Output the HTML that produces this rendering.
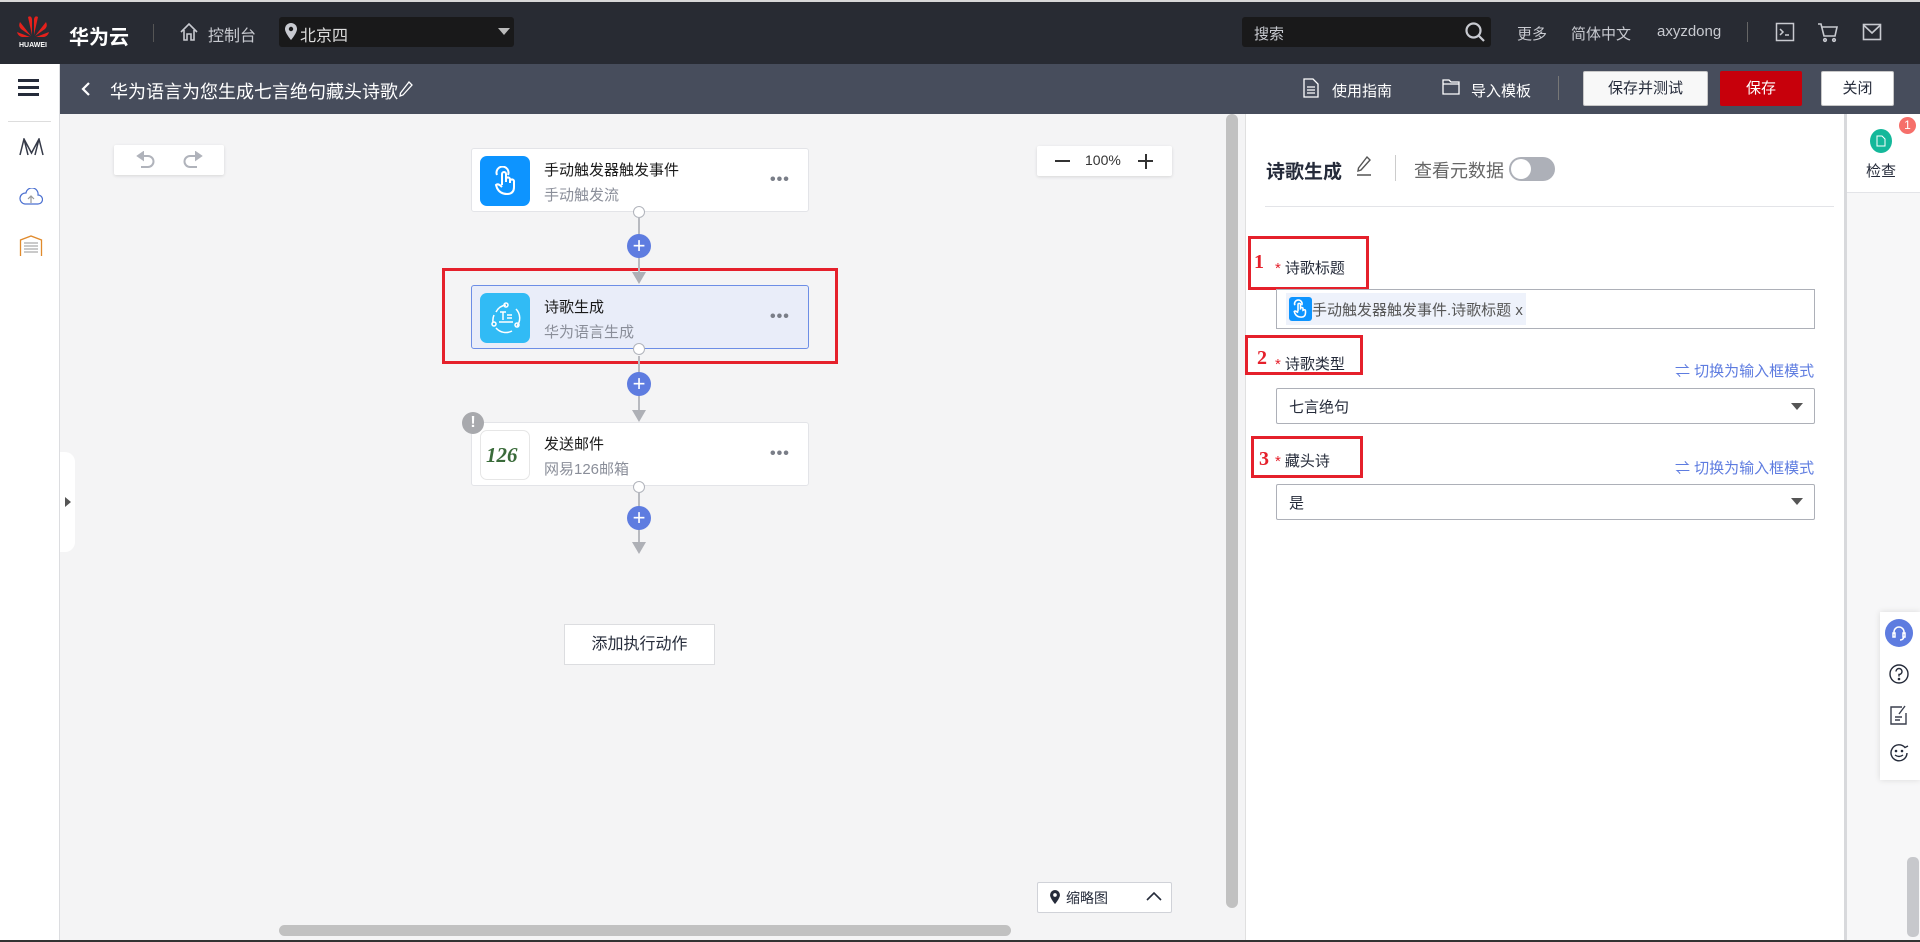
<!DOCTYPE html>
<html><head><meta charset="utf-8"><style>
*{box-sizing:border-box;margin:0;padding:0}
body{width:1920px;height:942px;overflow:hidden;position:relative;font-family:"Liberation Sans","Noto Sans CJK SC",sans-serif;background:#f4f4f5;color:#252b3a}
.a{position:absolute}
.top{left:0;top:0;width:1920px;height:64px;background:#282b33;border-top:2px solid #d8d8d8}
.sub{left:60px;top:64px;width:1860px;height:50px;background:#474d5c}
.wt{color:#fff}
.gt{color:#c8cad0;font-size:15px}
.btn{height:35px;border:1px solid #c8c8c8;background:#f8f8f8;font-size:15px;text-align:center;line-height:33px;border-radius:2px}
.card{left:471px;width:338px;height:64px;background:#fff;border:1px solid #e3e4e8;border-radius:3px}
.card .ic{position:absolute;left:8px;top:7px;width:50px;height:50px;border-radius:7px}
.card .t{position:absolute;left:72px;top:10px;font-size:15px;color:#191919}
.card .s{position:absolute;left:72px;top:35px;font-size:15px;color:#8a8e99}
.card .d{position:absolute;left:298px;top:22px;font-size:16px;color:#7a7e88;letter-spacing:1px;font-weight:bold}
.dot{width:12px;height:12px;border:1.5px solid #b0b3bb;border-radius:50%;background:#fff}
.plus{width:24px;height:24px;border-radius:50%;background:#5e7ce0;color:#fff;text-align:center;line-height:23px;font-size:22px}
.vl{width:2px;background:#b8bac0}
.arr{width:0;height:0;border-left:7px solid transparent;border-right:7px solid transparent;border-top:12px solid #aeb0b6}
.red{border:3px solid #e5202b}
.lab{font-size:15px;color:#252b3a}
.lab b{color:#e5202b;font-weight:normal;margin-right:4px}
.num{color:#e5202b;font-family:"Liberation Serif",serif;font-size:20px;font-weight:bold}
.inp{left:1276px;width:539px;border:1px solid #adb0b8;background:#fff}
.sw{color:#5e7ce0;font-size:15px}
.tri{width:0;height:0;border-left:6px solid transparent;border-right:6px solid transparent;border-top:7px solid #555}
</style></head><body>
<div class="a top"></div>
<svg class="a" style="left:15px;top:13px" width="36" height="36" viewBox="0 0 36 36">
<g fill="#e4211c"><path d="M17 22 L13 4 Q16 2 17 6Z"/><path d="M19 22 L23 4 Q20 2 19 6Z"/><path d="M16 23 L5 9 Q3 13 6 16Z"/><path d="M20 23 L31 9 Q33 13 30 16Z"/><path d="M15 24 L2 19 Q3 23 7 24Z"/><path d="M21 24 L34 19 Q33 23 29 24Z"/></g>
<text x="18" y="34" fill="#fff" font-size="7" font-family="Liberation Sans" text-anchor="middle" font-weight="bold">HUAWEI</text></svg>
<div class="a wt" style="left:69px;top:21px;font-size:20px;font-weight:bold">华为云</div>
<div class="a" style="left:153px;top:24px;width:1px;height:18px;background:#555"></div>
<svg class="a" style="left:179px;top:22px" width="20" height="20" viewBox="0 0 20 20" fill="none" stroke="#c8cad0" stroke-width="1.6"><path d="M2 10 L10 2 L18 10 M5 8 V18 H8 V12 H12 V18 H15 V8"/></svg>
<div class="a gt" style="left:208px;top:22px;font-size:16px">控制台</div>
<div class="a" style="left:279px;top:17px;width:235px;height:30px;background:#19191a;border-radius:3px"></div>
<svg class="a" style="left:285px;top:23px" width="12" height="17" viewBox="0 0 12 17"><path d="M6 0 A6 6 0 0 1 12 6 C12 10 6 17 6 17 C6 17 0 10 0 6 A6 6 0 0 1 6 0Z" fill="#c8cad0"/><circle cx="6" cy="6" r="2.2" fill="#19191a"/></svg>
<div class="a wt" style="left:300px;top:22px;font-size:16px;color:#ddd">北京四</div>
<div class="a tri" style="left:498px;top:28px;border-top-color:#bbb"></div>
<div class="a" style="left:1242px;top:17px;width:249px;height:30px;background:#19191a;border-radius:3px"></div>
<div class="a gt" style="left:1254px;top:23px">搜索</div>
<svg class="a" style="left:1464px;top:21px" width="22" height="22" viewBox="0 0 22 22" fill="none" stroke="#c8cad0" stroke-width="2.2"><circle cx="9.5" cy="9.5" r="7"/><path d="M14.5 14.5 L20 20"/></svg>
<div class="a gt" style="left:1517px;top:23px">更多</div>
<div class="a gt" style="left:1571px;top:23px">简体中文</div>
<div class="a gt" style="left:1657px;top:23px">axyzdong</div>
<div class="a" style="left:1747px;top:22px;width:1px;height:20px;background:#666"></div>
<svg class="a" style="left:1775px;top:22px" width="20" height="20" viewBox="0 0 20 20" fill="none" stroke="#c8cad0" stroke-width="1.5"><rect x="1.5" y="1.5" width="17" height="17"/><path d="M5 7 L8 10 L5 13 M10 13 H14"/></svg>
<svg class="a" style="left:1817px;top:21px" width="22" height="22" viewBox="0 0 22 22" fill="none" stroke="#c8cad0" stroke-width="1.6"><path d="M1 3 H4 L7 15 H18 L20 6 H5"/><circle cx="8" cy="19" r="1.3"/><circle cx="17" cy="19" r="1.3"/></svg>
<svg class="a" style="left:1862px;top:22px" width="20" height="20" viewBox="0 0 20 20" fill="none" stroke="#c8cad0" stroke-width="1.6"><rect x="1.5" y="2.5" width="17" height="15"/><path d="M1.5 3 L10 11 L18.5 3"/></svg>

<div class="a sub"></div>
<div class="a" style="left:0;top:64px;width:60px;height:878px;background:#fff;border-right:1px solid #dcdde0"></div>
<div class="a" style="left:18px;top:79px;width:21px;height:3px;background:#252b3a;box-shadow:0 7px 0 #252b3a,0 14px 0 #252b3a"></div>
<div class="a" style="left:8px;top:121px;width:43px;height:1px;background:#ddd"></div>
<svg class="a" style="left:19px;top:138px" width="25" height="18" viewBox="0 0 25 18" fill="none" stroke="#353a48" stroke-width="1.5"><path d="M1 17 L5 1 L12.5 15 L20 1 L24 17 M5 1 L9 17 M20 1 L16 17"/></svg>
<svg class="a" style="left:19px;top:188px" width="24" height="17" viewBox="0 0 24 17" fill="none" stroke="#4a6fd0" stroke-width="1.2"><path d="M6 16 H19 A4.5 4.5 0 0 0 19 7 A6 6 0 0 0 7 5 A5.5 5.5 0 0 0 6 16Z"/><path d="M12 15 V9 M9 11 L12 8 L15 11" stroke="#999"/></svg>
<svg class="a" style="left:19px;top:235px" width="24" height="21" viewBox="0 0 24 21" fill="none" stroke-width="1.3"><path d="M1.5 21 V5 L12 1 L22.5 5 V21" stroke="#e08a2c"/><path d="M5 8 H19 M5 11 H19 M5 14 H19 M5 17 H19" stroke="#aaa"/></svg>
<svg class="a" style="left:80px;top:81px" width="12" height="16" viewBox="0 0 12 16" fill="none" stroke="#fff" stroke-width="2.2"><path d="M9 2 L3 8 L9 14"/></svg>
<div class="a wt" style="left:110px;top:78px;font-size:18px">华为语言为您生成七言绝句藏头诗歌</div>
<svg class="a" style="left:398px;top:80px" width="16" height="18" viewBox="0 0 16 18" fill="none" stroke="#fff" stroke-width="1.3"><path d="M11 2 L14 5 L5 15 L2 16 L2.5 13Z"/></svg>
<svg class="a" style="left:1303px;top:78px" width="16" height="20" viewBox="0 0 16 20" fill="none" stroke="#fff" stroke-width="1.3"><path d="M1 1 H10 L15 6 V19 H1Z M4 9 H12 M4 12 H12 M4 15 H12"/></svg>
<div class="a wt" style="left:1332px;top:80px;font-size:15px">使用指南</div>
<svg class="a" style="left:1442px;top:79px" width="18" height="16" viewBox="0 0 18 16" fill="none" stroke="#fff" stroke-width="1.3"><path d="M1 1 H7 L9 3 H17 V15 H1Z M1 5 H17"/></svg>
<div class="a wt" style="left:1471px;top:80px;font-size:15px">导入模板</div>
<div class="a" style="left:1558px;top:76px;width:1px;height:24px;background:#777"></div>
<div class="a btn" style="left:1583px;top:71px;width:125px">保存并测试</div>
<div class="a btn" style="left:1720px;top:71px;width:82px;background:#c7000b;border-color:#c7000b;color:#fff">保存</div>
<div class="a btn" style="left:1821px;top:71px;width:73px;background:#fff">关闭</div>

<div class="a" style="left:114px;top:145px;width:110px;height:30px;background:#fff;border-radius:2px;box-shadow:0 1px 3px rgba(0,0,0,.12)"></div>
<svg class="a" style="left:135px;top:151px" width="70" height="18" viewBox="0 0 70 18" fill="none" stroke="#b0b3bb" stroke-width="2"><path d="M6 5 H13 A5 5 0 0 1 13 16 H6"/><path d="M3 5 L8 1.5 V8.5Z" fill="#b0b3bb"/><path d="M62 5 H55 A5 5 0 0 0 55 16 H62"/><path d="M66 5 L61 1.5 V8.5Z" fill="#b0b3bb"/></svg>
<div class="a" style="left:1037px;top:146px;width:135px;height:30px;background:#fff;border-radius:2px;box-shadow:0 1px 3px rgba(0,0,0,.12)"></div>
<div class="a" style="left:1055px;top:160px;width:15px;height:2px;background:#333"></div>
<div class="a" style="left:1085px;top:152px;font-size:14px;color:#333">100%</div>
<div class="a" style="left:1138px;top:160px;width:15px;height:2px;background:#333"></div>
<div class="a" style="left:1144.5px;top:154px;width:2px;height:15px;background:#333"></div>

<div class="a red" style="left:442px;top:268px;width:396px;height:96px"></div>
<div class="a card" style="top:148px"><div class="ic" style="background:#0d94ff"></div>
<svg class="a" style="left:22px;top:17px" width="24" height="30" viewBox="0 0 24 30" fill="none" stroke="#fff" stroke-width="2"><path d="M3 9 A6 6 0 1 1 14 9"/><path d="M8 19 V8 A2 2 0 0 1 12 8 V16 M12 13 A2 2 0 0 1 16 14 V17 M16 15 A2 2 0 0 1 20 16 V21 Q20 28 13 28 Q6 28 3 22 L2 19 Q4 17 8 21"/></svg>
<div class="t">手动触发器触发事件</div><div class="s">手动触发流</div><div class="d">•••</div></div>
<div class="a card" style="top:285px;background:#e9edf9;border-color:#6d8ee6"><div class="ic" style="background:#31bbf5"></div>
<svg class="a" style="left:16px;top:14px" width="36" height="36" viewBox="0 0 36 36" fill="none" stroke="#fff" stroke-width="1.5"><path d="M8 12 A13 13 0 0 1 18 5 M28 9 A13 13 0 0 1 29 26 M24 31 A13 13 0 0 1 8 28 M5 22 A13 13 0 0 1 6 15"/><circle cx="18" cy="5" r="2"/><circle cx="29" cy="25" r="2"/><circle cx="6" cy="24" r="2"/><path d="M12 12 H18 M15 12 V20 M19 15 H24 M19 18 H24 M11 22 H25"/></svg>
<div class="t">诗歌生成</div><div class="s">华为语言生成</div><div class="d">•••</div></div>
<div class="a card" style="top:422px"><div class="ic" style="border:1px solid #e6e6e6;background:#fff"></div>
<div class="a" style="left:14px;top:20px;font-size:21px;font-weight:bold;font-style:italic;color:#3a6b3a;font-family:'Liberation Serif',serif">126</div>
<div class="t">发送邮件</div><div class="s">网易126邮箱</div><div class="d">•••</div></div>
<div class="a" style="left:462px;top:412px;width:22px;height:22px;border-radius:50%;background:#a8a9ad;color:#fff;text-align:center;font-weight:bold;font-size:16px;line-height:22px">!</div>

<div class="a vl" style="left:638px;top:218px;height:55px"></div>
<div class="a vl" style="left:638px;top:356px;height:55px"></div>
<div class="a vl" style="left:638px;top:493px;height:50px"></div>
<div class="a dot" style="left:633px;top:206px"></div>
<div class="a dot" style="left:633px;top:343px"></div>
<div class="a dot" style="left:633px;top:481px"></div>
<div class="a plus" style="left:627px;top:234px">+</div>
<div class="a plus" style="left:627px;top:372px">+</div>
<div class="a plus" style="left:627px;top:506px">+</div>
<div class="a arr" style="left:632px;top:272px"></div>
<div class="a arr" style="left:632px;top:410px"></div>
<div class="a arr" style="left:632px;top:542px"></div>

<div class="a" style="left:564px;top:624px;width:151px;height:41px;background:#fff;border:1px solid #dcdde0;font-size:16px;text-align:center;line-height:39px;color:#252b3a">添加执行动作</div>
<div class="a" style="left:1037px;top:882px;width:135px;height:31px;background:#fff;border:1px solid #d0d2d8;border-radius:2px"></div>
<svg class="a" style="left:1050px;top:890px" width="10" height="14" viewBox="0 0 12 17"><path d="M6 0 A6 6 0 0 1 12 6 C12 10 6 17 6 17 C6 17 0 10 0 6 A6 6 0 0 1 6 0Z" fill="#252b3a"/><circle cx="6" cy="6" r="2.2" fill="#fff"/></svg>
<div class="a" style="left:1066px;top:888px;font-size:14px">缩略图</div>
<svg class="a" style="left:1146px;top:891px" width="16" height="10" viewBox="0 0 16 10" fill="none" stroke="#252b3a" stroke-width="1.6"><path d="M1 9 L8 2 L15 9"/></svg>
<div class="a" style="left:60px;top:452px;width:15px;height:100px;background:#fff;border-radius:0 10px 10px 0"></div>
<div class="a" style="left:65px;top:497px;width:0;height:0;border-top:5px solid transparent;border-bottom:5px solid transparent;border-left:6px solid #555"></div>
<div class="a" style="left:279px;top:925px;width:732px;height:11px;background:#c1c1c1;border-radius:6px"></div>
<div class="a" style="left:1226px;top:114px;width:12px;height:794px;background:#c1c1c1;border-radius:6px"></div>

<div class="a" style="left:1245px;top:114px;width:600px;height:828px;background:#fff;border-left:1px solid #e0e0e0"></div>
<div class="a" style="left:1266px;top:157px;font-size:19px;font-weight:bold;color:#252b3a">诗歌生成</div>
<svg class="a" style="left:1355px;top:155px" width="18" height="22" viewBox="0 0 18 22" fill="none" stroke="#555" stroke-width="1.4"><path d="M12 2 L15 5 L6 15 L3 16 L3.5 13Z M2 20 H16"/></svg>
<div class="a" style="left:1395px;top:155px;width:1px;height:26px;background:#ccc"></div>
<div class="a" style="left:1414px;top:157px;font-size:18px;color:#666">查看元数据</div>
<div class="a" style="left:1509px;top:157px;width:46px;height:24px;border-radius:12px;background:#adb0b8"></div>
<div class="a" style="left:1511px;top:159px;width:20px;height:20px;border-radius:50%;background:#fff"></div>
<div class="a" style="left:1265px;top:206px;width:569px;height:1px;background:#e3e4e8"></div>

<div class="a red" style="left:1248px;top:236px;width:121px;height:54px"></div>
<div class="a num" style="left:1254px;top:251px">1</div>
<div class="a lab" style="left:1275px;top:257px"><b>*</b>诗歌标题</div>
<div class="a inp" style="left:1276px;top:289px;height:40px"></div>
<div class="a" style="left:1286px;top:293px;width:240px;height:32px;background:#eef2fb"></div>
<div class="a" style="left:1289px;top:297px;width:23px;height:24px;background:#0d94ff;border-radius:3px"></div>
<svg class="a" style="left:1293px;top:299px" width="15" height="20" viewBox="0 0 24 30" fill="none" stroke="#fff" stroke-width="2.5"><path d="M3 9 A6 6 0 1 1 14 9"/><path d="M8 19 V8 A2 2 0 0 1 12 8 V16 M12 13 Q16 12 16 14 V17 Q20 15 20 18 V21 Q20 28 13 28 Q6 28 3 22 L2 19 Q4 17 8 21"/></svg>
<div class="a" style="left:1312px;top:299px;font-size:15px;color:#555">手动触发器触发事件.诗歌标题 x</div>

<div class="a red" style="left:1245px;top:335px;width:118px;height:40px"></div>
<div class="a num" style="left:1257px;top:347px">2</div>
<div class="a lab" style="left:1275px;top:353px"><b>*</b>诗歌类型</div>
<div class="a sw" style="left:1675px;top:360px">⇌ 切换为输入框模式</div>
<div class="a inp" style="left:1276px;top:388px;height:36px;border-radius:2px"></div>
<div class="a" style="left:1289px;top:396px;font-size:15px">七言绝句</div>
<div class="a tri" style="left:1791px;top:403px"></div>

<div class="a red" style="left:1251px;top:436px;width:112px;height:42px"></div>
<div class="a num" style="left:1259px;top:448px">3</div>
<div class="a lab" style="left:1275px;top:450px"><b>*</b>藏头诗</div>
<div class="a sw" style="left:1675px;top:457px">⇌ 切换为输入框模式</div>
<div class="a inp" style="left:1276px;top:484px;height:36px;border-radius:2px"></div>
<div class="a" style="left:1289px;top:492px;font-size:15px">是</div>
<div class="a tri" style="left:1791px;top:498px"></div>

<div class="a" style="left:1844px;top:114px;width:76px;height:828px;background:#f7f7f8;border-left:3px solid #d8d9dc"></div>
<div class="a" style="left:1847px;top:114px;width:73px;height:79px;background:#fff;border-bottom:1px solid #e3e4e8"></div>
<div class="a" style="left:1870px;top:129px;width:22px;height:24px;border-radius:50%;background:#14b89a"></div>
<svg class="a" style="left:1876px;top:135px" width="10" height="12" viewBox="0 0 10 12" fill="none" stroke="#fff" stroke-width="1"><path d="M1 1 H6 L9 4 V11 H1Z"/></svg>
<div class="a" style="left:1899px;top:117px;width:17px;height:17px;border-radius:50%;background:#f66f6a;color:#fff;font-size:12px;text-align:center;line-height:17px">1</div>
<div class="a" style="left:1866px;top:160px;font-size:15px">检查</div>
<div class="a" style="left:1880px;top:612px;width:40px;height:168px;background:#fff;box-shadow:0 0 6px rgba(0,0,0,.12)"></div>
<div class="a" style="left:1885px;top:619px;width:28px;height:28px;border-radius:50%;background:#5e7ce0"></div>
<svg class="a" style="left:1891px;top:625px" width="16" height="16" viewBox="0 0 16 16" fill="none" stroke="#fff" stroke-width="1.5"><path d="M3 9 V7 A5 5 0 0 1 13 7 V9 M2 8 H4 V12 H2Z M12 8 H14 V12 H12Z M13 12 Q12 15 9 15"/></svg>
<svg class="a" style="left:1889px;top:664px" width="20" height="20" viewBox="0 0 20 20" fill="none" stroke="#252b3a" stroke-width="1.4"><circle cx="10" cy="10" r="9"/><path d="M7 7.5 A3 3 0 1 1 10 10.5 V12.5"/><circle cx="10" cy="15" r=".6"/></svg>
<svg class="a" style="left:1890px;top:705px" width="19" height="20" viewBox="0 0 19 20" fill="none" stroke="#3a3f4d" stroke-width="1.4"><path d="M12 2 H1 V19 H16 V8 M15 1 L9 9 M5 12 H12 M5 15 H10" /></svg>
<svg class="a" style="left:1889px;top:743px" width="20" height="20" viewBox="0 0 20 20" fill="none" stroke="#252b3a" stroke-width="1.4"><path d="M18 10 A8 8 0 1 1 16 4.5 L19 3"/><circle cx="7" cy="8" r=".6"/><circle cx="13" cy="8" r=".6"/><path d="M6 12 Q10 15 14 12"/></svg>
<div class="a" style="left:1907px;top:857px;width:12px;height:80px;background:#c7c8cc;border-radius:5px"></div>
<div class="a" style="left:0;top:940px;width:1920px;height:2px;background:#333"></div>
</body></html>
